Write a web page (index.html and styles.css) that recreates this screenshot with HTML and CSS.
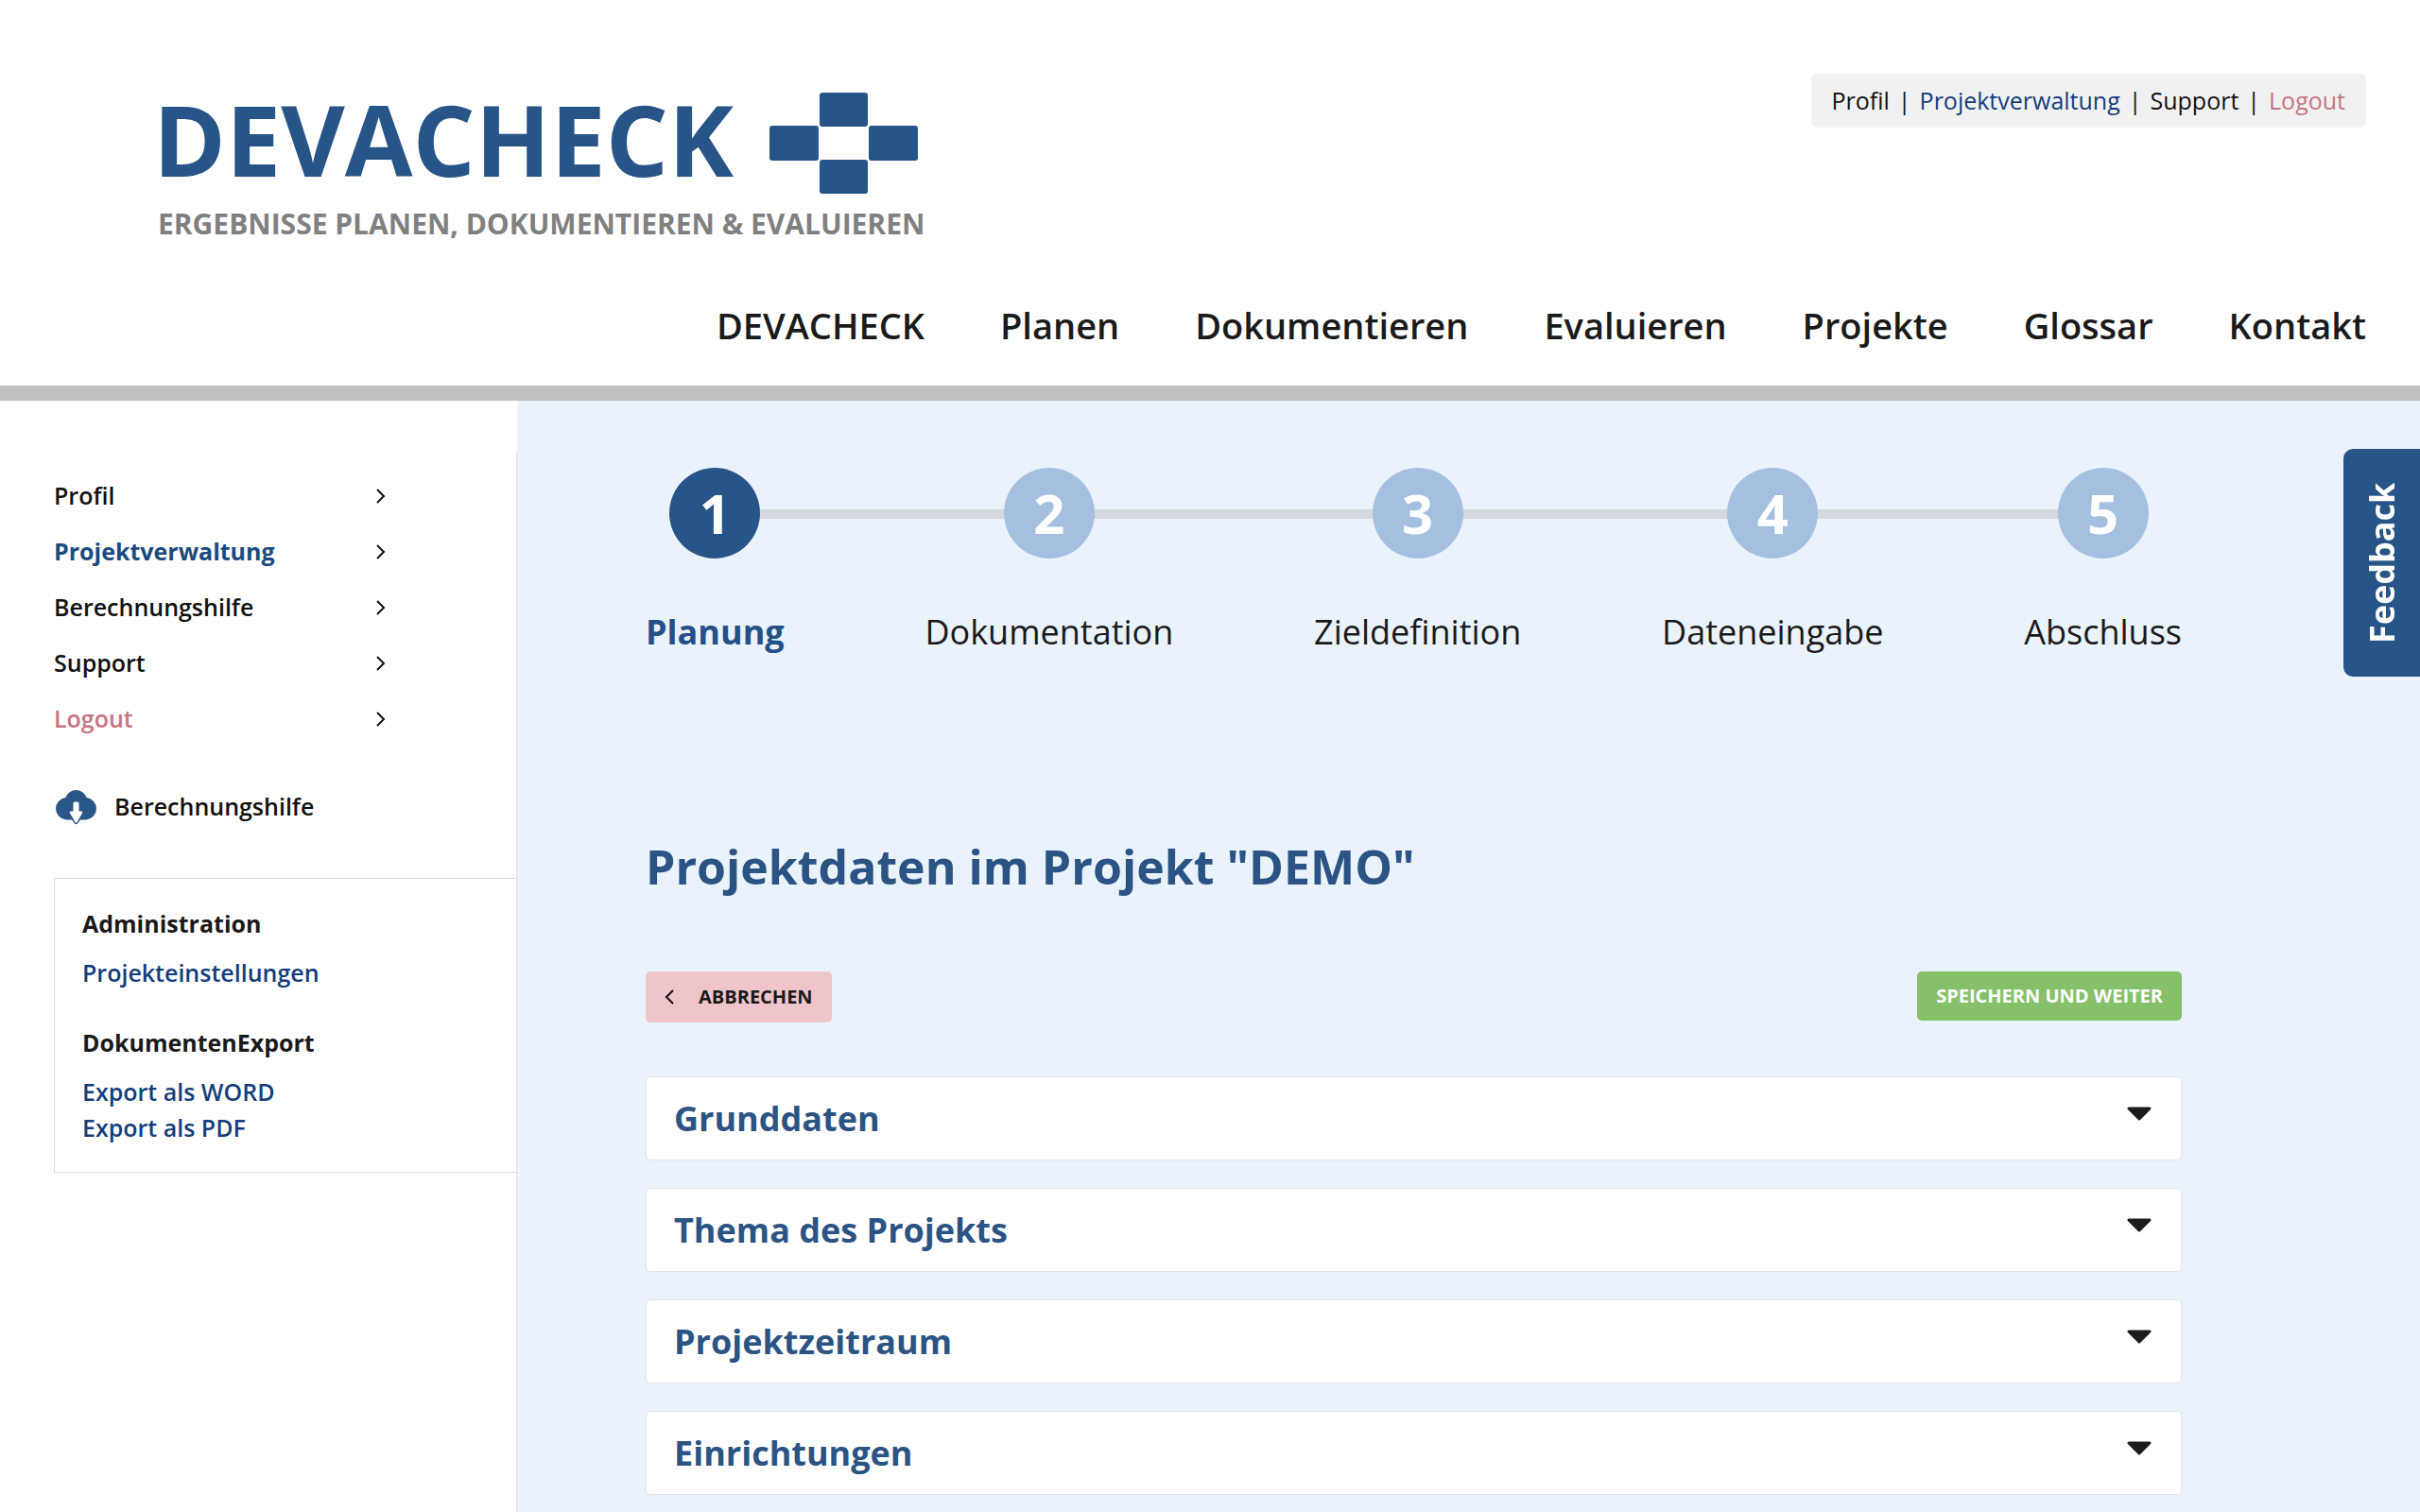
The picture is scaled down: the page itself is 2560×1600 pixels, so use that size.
FILE: index.html
```html
<!DOCTYPE html>
<html lang="de">
<head>
<meta charset="utf-8">
<meta name="viewport" content="width=device-width, initial-scale=1">
<title>DEVACHECK – Projektdaten</title>
<link rel="stylesheet" href="styles.css">
</head>
<body>
<header class="site-header">
  <div class="header-top">
    <a class="brand" href="#">
      <span class="brand-row">
        <span class="brand-name">DEVACHECK</span>
        <svg class="brand-mark" viewBox="0 0 157 107" aria-hidden="true">
          <rect x="53" y="0" width="51" height="36" rx="3"/>
          <rect x="0" y="35" width="52" height="37" rx="3"/>
          <rect x="105" y="35" width="52" height="37" rx="3"/>
          <rect x="53" y="71" width="51" height="36" rx="3"/>
        </svg>
      </span>
      <span class="brand-tagline">ERGEBNISSE PLANEN, DOKUMENTIEREN &amp; EVALUIEREN</span>
    </a>
    <nav class="user-nav" aria-label="Benutzer">
      <a href="#">Profil</a><span>|</span><a class="is-active" href="#">Projektverwaltung</a><span>|</span><a href="#">Support</a><span>|</span><a class="is-logout" href="#">Logout</a>
    </nav>
  </div>
  <nav class="main-nav" aria-label="Hauptmenü">
    <a href="#">DEVACHECK</a>
    <a href="#">Planen</a>
    <a href="#">Dokumentieren</a>
    <a href="#">Evaluieren</a>
    <a href="#">Projekte</a>
    <a href="#">Glossar</a>
    <a href="#">Kontakt</a>
  </nav>
</header>

<div class="layout">
  <aside class="sidebar">
    <nav class="side-nav" aria-label="Seitenmenü">
      <a href="#">Profil <svg class="chevron" viewBox="0 0 10 16" aria-hidden="true"><path d="M1 1l7 7-7 7"/></svg></a>
      <a class="is-active" href="#">Projektverwaltung <svg class="chevron" viewBox="0 0 10 16" aria-hidden="true"><path d="M1 1l7 7-7 7"/></svg></a>
      <a href="#">Berechnungshilfe <svg class="chevron" viewBox="0 0 10 16" aria-hidden="true"><path d="M1 1l7 7-7 7"/></svg></a>
      <a href="#">Support <svg class="chevron" viewBox="0 0 10 16" aria-hidden="true"><path d="M1 1l7 7-7 7"/></svg></a>
      <a class="is-logout" href="#">Logout <svg class="chevron" viewBox="0 0 10 16" aria-hidden="true"><path d="M1 1l7 7-7 7"/></svg></a>
    </nav>
    <a class="download" href="#">
      <svg class="cloud" viewBox="-1 0 46 40" aria-hidden="true">
        <path class="cloud-body" d="M12 34.500A11.800 11.800 0 0 1 11.500 11A11.600 11.600 0 0 1 33.500 11A11.800 11.800 0 0 1 33 34.500H27L24 38.500Q22.500 40 21 38.500L18 34.500Z"/>
        <path class="cloud-arrow" d="M19.500 17Q19.500 15.500 21 15.500H24Q25.500 15.500 25.500 17V25.500H28Q30 25.500 29 27.500L23.500 37Q22.500 38.500 21.500 37L16 27.500Q15 25.500 17 25.500H19.500Z"/>
      </svg>
      Berechnungshilfe
    </a>
    <section class="admin-box">
      <h2>Administration</h2>
      <ul>
        <li><a href="#">Projekteinstellungen</a></li>
      </ul>
      <h2>DokumentenExport</h2>
      <ul>
        <li><a href="#">Export als WORD</a></li>
        <li><a href="#">Export als PDF</a></li>
      </ul>
    </section>
  </aside>

  <main class="content">
    <ol class="steps">
      <li class="step is-current"><a href="#"><span class="step-number">1</span><span class="step-label">Planung</span></a></li>
      <li class="step"><a href="#"><span class="step-number">2</span><span class="step-label">Dokumentation</span></a></li>
      <li class="step"><a href="#"><span class="step-number">3</span><span class="step-label">Zieldefinition</span></a></li>
      <li class="step"><a href="#"><span class="step-number">4</span><span class="step-label">Dateneingabe</span></a></li>
      <li class="step"><a href="#"><span class="step-number">5</span><span class="step-label">Abschluss</span></a></li>
    </ol>
    <h1>Projektdaten im Projekt "DEMO"</h1>
    <div class="actions">
      <button type="button" class="btn btn-cancel"><svg class="chevron" viewBox="0 0 10 16" aria-hidden="true"><path d="M9 1L2 8l7 7"/></svg>ABBRECHEN</button>
      <button type="button" class="btn btn-save">SPEICHERN UND WEITER</button>
    </div>
    <div class="panels">
      <button type="button" class="panel" aria-expanded="false">Grunddaten <svg class="caret" viewBox="0 0 26 15" aria-hidden="true"><path d="M2 2H24L13 13Z"/></svg></button>
      <button type="button" class="panel" aria-expanded="false">Thema des Projekts <svg class="caret" viewBox="0 0 26 15" aria-hidden="true"><path d="M2 2H24L13 13Z"/></svg></button>
      <button type="button" class="panel" aria-expanded="false">Projektzeitraum <svg class="caret" viewBox="0 0 26 15" aria-hidden="true"><path d="M2 2H24L13 13Z"/></svg></button>
      <button type="button" class="panel" aria-expanded="false">Einrichtungen <svg class="caret" viewBox="0 0 26 15" aria-hidden="true"><path d="M2 2H24L13 13Z"/></svg></button>
    </div>
  </main>
</div>
<button type="button" class="feedback">Feedback</button>
</body>
</html>
```
FILE: styles.css
```css
* {
  box-sizing: border-box;
}

body {
  display: flex;
  flex-direction: column;
  min-height: 100vh;
  margin: 0;
  background: #fff;
  color: #1a1a1a;
  font-family: "Open Sans", "Noto Sans", sans-serif;
  font-size: 25px;
}

a {
  color: inherit;
  text-decoration: none;
}

button {
  border: 0;
  font-family: inherit;
  cursor: pointer;
}

ul,
ol {
  margin: 0;
  padding: 0;
  list-style: none;
}

/* Header */
.site-header {
  padding: 78px 57px 0 162px;
  border-bottom: 16px solid #bdc0bf;
}

.header-top {
  display: flex;
  justify-content: space-between;
  align-items: flex-start;
}

.brand {
  display: flex;
  flex-direction: column;
  color: #275587;
}

.brand-row {
  display: flex;
  align-items: flex-end;
  gap: 38px;
}

.brand-name {
  font-size: 104px;
  font-weight: 700;
  line-height: 138px;
}

.brand-mark {
  width: 157px;
  height: 107px;
  margin-bottom: 11px;
  fill: currentColor;
}

.brand-tagline {
  padding-left: 5px;
  color: #808080;
  font-size: 30px;
  font-weight: 700;
  line-height: 42px;
}

.user-nav {
  display: flex;
  gap: 9px;
  padding: 0 22px;
  border-radius: 6px;
  background: #f1f1f1;
  color: #111;
  line-height: 57px;
}

.user-nav .is-active {
  color: #143d7c;
}

.is-logout {
  color: #c57581;
}

.main-nav {
  display: flex;
  justify-content: flex-end;
  gap: 80px;
  padding: 54px 0 32px;
  font-size: 38px;
  font-weight: 600;
  line-height: 64px;
}

/* Columns */
.layout {
  display: flex;
  flex: 1;
}

.sidebar {
  flex: none;
  width: 547px;
  margin-top: 54px;
  padding: 17px 0 40px 57px;
  border-right: 1px solid #dde3e9;
  color: #111;
  font-weight: 600;
}

.side-nav a {
  display: flex;
  justify-content: space-between;
  align-items: center;
  width: 351px;
  line-height: 59px;
}

.side-nav .is-active {
  color: #1a4a80;
  font-weight: 700;
}

.chevron {
  width: 10px;
  height: 16px;
  fill: none;
  stroke: #111;
  stroke-width: 2;
}

.download {
  display: flex;
  align-items: center;
  gap: 18px;
  margin-top: 38px;
  line-height: 50px;
}

.cloud {
  width: 46px;
  height: 40px;
}

.cloud-body {
  fill: #2a5788;
}

.cloud-arrow {
  fill: #fff;
}

.admin-box {
  margin-top: 51px;
  padding: 29px 29px 28px;
  border: 1px solid #d9dbdd;
  border-right: 0;
}

.admin-box h2 {
  margin: 0 0 14px;
  color: #1a1a1a;
  font-size: 25px;
  font-weight: 700;
  line-height: 37px;
}

.admin-box ul {
  color: #143d7c;
  line-height: 38px;
}

.admin-box ul + h2 {
  margin-top: 37px;
}

.content {
  flex: 1;
  padding: 71px 252px 18px 136px;
  background: #eaf2fb;
}

/* Progress */
.steps {
  display: flex;
  justify-content: space-between;
  position: relative;
}

.steps::before {
  position: absolute;
  top: 44px;
  right: 80px;
  left: 80px;
  height: 10px;
  background: #d3d8dd;
  content: "";
}

.step a {
  display: flex;
  flex-direction: column;
  align-items: center;
  gap: 52px;
  position: relative;
}

.step-number {
  width: 96px;
  border-radius: 50%;
  background: #a4bfe0;
  color: #fff;
  font-size: 58px;
  font-weight: 700;
  line-height: 96px;
  text-align: center;
}

.step-label {
  font-size: 36px;
  line-height: 52px;
}

.is-current .step-number {
  background: #275587;
}

.is-current .step-label {
  color: #245087;
  font-weight: 700;
}

h1 {
  margin: 188px 0 77px;
  color: #2b5484;
  font-size: 50px;
  font-weight: 700;
  line-height: 68px;
}

.actions {
  display: flex;
  justify-content: space-between;
  align-items: flex-start;
}

.btn {
  display: flex;
  align-items: center;
  padding: 0 20px;
  border-radius: 5px;
  font-size: 20px;
  font-weight: 700;
  line-height: 52px;
}

.btn-cancel {
  gap: 26px;
  background: #efc5cb;
  color: #1a1a1a;
  line-height: 54px;
}

.btn-save {
  background: #86c06a;
  color: #fff;
}

.panels {
  display: flex;
  flex-direction: column;
  gap: 29px;
  margin-top: 57px;
}

.panel {
  display: flex;
  justify-content: space-between;
  align-items: center;
  padding: 0 31px 0 29px;
  border: 1px solid #dfe4ea;
  border-radius: 5px;
  background: #fff;
  color: #2b5484;
  font-size: 36px;
  font-weight: 700;
  line-height: 87px;
}

.caret {
  width: 26px;
  height: 15px;
  margin-bottom: 10px;
  fill: #1c1c1c;
  stroke: #1c1c1c;
  stroke-width: 3;
  stroke-linejoin: round;
}

/* Tab fixed to the right window edge */
.feedback {
  position: fixed;
  top: 475px;
  right: 0;
  width: 81px;
  height: 241px;
  padding: 0;
  border-radius: 0 10px 10px 0;
  background: #275587;
  color: #fff;
  font-size: 36px;
  font-weight: 700;
  writing-mode: vertical-rl;
  transform: rotate(180deg);
}
```
